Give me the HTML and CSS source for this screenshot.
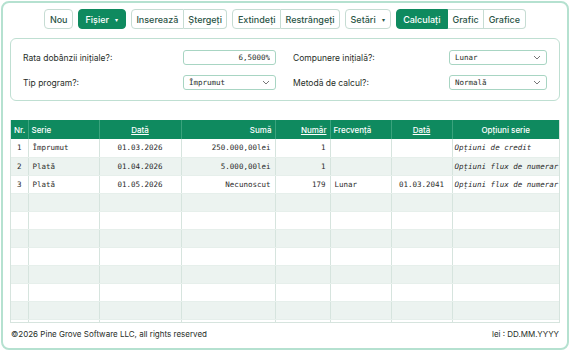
FILE: index.html
```html
<!DOCTYPE html>
<html lang="ro">
<head>
    <meta charset="UTF-8">
    <meta name="viewport" content="width=device-width, initial-scale=1.0">
    <title>Calculator împrumut</title>
    <link rel="stylesheet" href="styles.css">
</head>
<body>

<div class="app">

    <!-- Bara de butoane -->
    <div class="toolbar">
        <button class="btn">Nou</button>
        <button class="btn btn-green">Fișier <span class="caret">&#9662;</span></button>
        <div class="btn-group">
            <button class="btn">Inserează</button>
            <button class="btn">Ștergeți</button>
        </div>
        <div class="btn-group">
            <button class="btn">Extindeți</button>
            <button class="btn">Restrângeți</button>
        </div>
        <button class="btn">Setări <span class="caret">&#9662;</span></button>
        <div class="btn-group">
            <button class="btn btn-green">Calculați</button>
            <button class="btn">Grafic</button>
            <button class="btn">Grafice</button>
        </div>
    </div>

    <!-- Setări de bază -->
    <div class="panel">
        <label class="lbl">Rata dobânzii inițiale?:</label>
        <input class="field field-num" type="text" value="6,5000%">
        <label class="lbl lbl-2">Compunere inițială?:</label>
        <select class="field"><option>Lunar</option></select>

        <label class="lbl">Tip program?:</label>
        <select class="field"><option>Împrumut</option></select>
        <label class="lbl lbl-2">Metodă de calcul?:</label>
        <select class="field"><option>Normală</option></select>
    </div>

    <!-- Tabel cu evenimente -->
    <div class="grid-wrap">
        <table class="grid">
            <colgroup>
                <col style="width:17px">
                <col style="width:71px">
                <col style="width:82px">
                <col style="width:94px">
                <col style="width:55px">
                <col style="width:61px">
                <col style="width:61px">
                <col>
            </colgroup>
            <thead>
                <tr>
                    <th class="c">Nr.</th>
                    <th>Serie</th>
                    <th class="c"><u>Dată</u></th>
                    <th class="r">Sumă</th>
                    <th class="r"><u>Număr</u></th>
                    <th>Frecvență</th>
                    <th class="c"><u>Dată</u></th>
                    <th class="c">Opțiuni serie</th>
                </tr>
            </thead>
            <tbody>
                <tr>
                    <td class="c">1</td><td>Împrumut</td><td class="c">01.03.2026</td><td class="r">250.000,00lei</td>
                    <td class="r">1</td><td></td><td></td><td class="i">Opțiuni de credit</td>
                </tr>
                <tr>
                    <td class="c">2</td><td>Plată</td><td class="c">01.04.2026</td><td class="r">5.000,00lei</td>
                    <td class="r">1</td><td></td><td></td><td class="i">Opțiuni flux de numerar</td>
                </tr>
                <tr>
                    <td class="c">3</td><td>Plată</td><td class="c">01.05.2026</td><td class="r">Necunoscut</td>
                    <td class="r">179</td><td>Lunar</td><td class="c">01.03.2041</td><td class="i">Opțiuni flux de numerar</td>
                </tr>
                <tr><td></td><td></td><td></td><td></td><td></td><td></td><td></td><td></td></tr>
                <tr><td></td><td></td><td></td><td></td><td></td><td></td><td></td><td></td></tr>
                <tr><td></td><td></td><td></td><td></td><td></td><td></td><td></td><td></td></tr>
                <tr><td></td><td></td><td></td><td></td><td></td><td></td><td></td><td></td></tr>
                <tr><td></td><td></td><td></td><td></td><td></td><td></td><td></td><td></td></tr>
                <tr><td></td><td></td><td></td><td></td><td></td><td></td><td></td><td></td></tr>
                <tr><td></td><td></td><td></td><td></td><td></td><td></td><td></td><td></td></tr>
                <tr><td></td><td></td><td></td><td></td><td></td><td></td><td></td><td></td></tr>
                <tr><td></td><td></td><td></td><td></td><td></td><td></td><td></td><td></td></tr>
            </tbody>
        </table>
    </div>

    <!-- Subsol -->
    <div class="footer">
        <span>©2026 Pine Grove Software LLC, all rights reserved</span>
        <span>lei : DD.MM.YYYY</span>
    </div>

</div>

</body>
</html>
```

FILE: styles.css
```css
body {
    margin: 0;
    font-family: Inter, "Noto Sans", sans-serif;
    color: #1f2d28;
    background: #ffffff;
}

.app {
    box-sizing: border-box;
    width: 568px;
    height: 349px;
    margin: 1px;
    border: 2px solid #b5e1d0;
    border-radius: 8px;
    padding: 6px 7px 0 7px;
    display: flex;
    flex-direction: column;
}

/* Bara de butoane */
.toolbar {
    display: flex;
    justify-content: center;
    gap: 5px;
    height: 20px;
}

.btn-group {
    display: flex;
}

.btn {
    height: 20px;
    padding: 0 4.5px;
    border: 1px solid #c6dcd3;
    border-radius: 4px;
    background: #ffffff;
    color: #2b5446;
    font-family: Inter, sans-serif;
    font-size: 9px;
    font-weight: 500;
    cursor: pointer;
}

.btn-group .btn {
    border-radius: 0;
}

.btn-group .btn + .btn {
    border-left: none;
}

.btn-group .btn:first-child {
    border-radius: 4px 0 0 4px;
}

.btn-group .btn:last-child {
    border-radius: 0 4px 4px 0;
}

.btn-green {
    background: #0f8a5f;
    border-color: #0f8a5f;
    color: #ffffff;
    padding: 0 6.5px;
}

.caret {
    font-size: 6px;
    margin-left: 4px;
    vertical-align: 1px;
}

/* Panou setări */
.panel {
    margin-top: 9px;
    height: 63px;
    box-sizing: border-box;
    border: 1px solid #bfdfd2;
    border-radius: 6px;
    padding: 11px 0 0 12px;
    display: grid;
    grid-template-columns: 160px 93px 173px 98px;
    grid-auto-rows: 15px;
    row-gap: 10px;
    align-items: center;
}

.lbl {
    font-size: 8.5px;
    color: #1f2d28;
}

.lbl-2 {
    padding-left: 17px;
}

.field {
    box-sizing: border-box;
    width: 100%;
    height: 15px;
    border: 1px solid #a8d5c3;
    border-radius: 3px;
    background: #ffffff;
    font-family: "DejaVu Sans Mono", "Liberation Mono", monospace;
    font-size: 7.5px;
    color: #1f2d28;
    padding: 0 5px;
    outline: none;
}

select.field {
    appearance: none;
    -webkit-appearance: none;
    background-image: url("data:image/svg+xml,%3Csvg xmlns='http://www.w3.org/2000/svg' width='8' height='5' viewBox='0 0 8 5'%3E%3Cpath d='M1 1l3 3 3-3' fill='none' stroke='%23777' stroke-width='1'/%3E%3C/svg%3E");
    background-repeat: no-repeat;
    background-position: right 5px center;
}

.field-num {
    text-align: right;
}

/* Tabel */
.grid-wrap {
    margin-top: 19px;
    height: 203px;
    overflow: hidden;
    border-left: 1px solid #d6e4de;
    border-right: 1px solid #d6e4de;
    border-bottom: 1px solid #d6e4de;
    box-sizing: border-box;
}

.grid {
    width: 100%;
    border-collapse: collapse;
    table-layout: fixed;
}

.grid th {
    height: 19px;
    background: #0f8a5f;
    color: #ffffff;
    font-family: Inter, sans-serif;
    font-size: 8px;
    font-weight: 500;
    text-align: left;
    padding: 0 3px;
    border-right: 1px solid #3aa37d;
}

.grid th:last-child {
    border-right: none;
}

.grid td {
    height: 18px;
    box-sizing: border-box;
    padding: 0 4px;
    font-family: "DejaVu Sans Mono", "Liberation Mono", monospace;
    font-size: 7.5px;
    color: #2a2a2a;
    border-right: 1px solid #d6e4de;
    border-bottom: 1px solid #e6efeb;
    white-space: nowrap;
    overflow: hidden;
}

.grid td:last-child {
    border-right: none;
}

.grid tbody tr:nth-child(even) td {
    background: #ecf3f0;
}

.grid .c {
    text-align: center;
}

.grid .r {
    text-align: right;
}

.grid .i {
    font-style: italic;
    padding-left: 2px;
}

/* Subsol */
.footer {
    flex: 1;
    display: flex;
    justify-content: space-between;
    align-items: center;
    padding: 0 1px 3px 1px;
    font-size: 8px;
    color: #1f2d28;
}
```
